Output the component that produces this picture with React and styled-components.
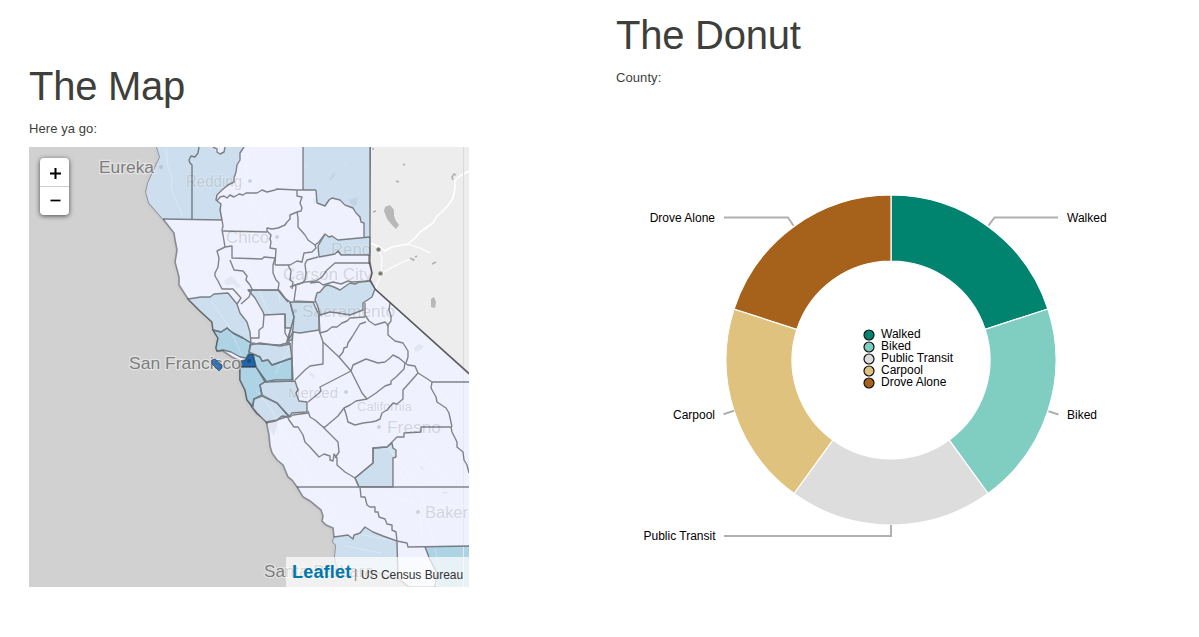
import React from "react";
import styled, { createGlobalStyle } from "styled-components";

const GlobalStyle = createGlobalStyle`
  body {
    margin: 0;
    background: #fff;
    color: #3e3f3a;
    font-family: "Liberation Sans", Arial, sans-serif;
    font-size: 13px;
    line-height: 18px;
  }
`;

const Page = styled.main`
  display: flex;
  width: 1199px;
  height: 637px;
  overflow: hidden;
`;

const Column = styled.section`
  box-sizing: border-box;
  flex: none;
  width: ${(p) => p.$width}px;
  padding-top: ${(p) => p.$top}px;
  padding-left: 29px;
`;

const Title = styled.h1`
  margin: 0 0 12px;
  font-size: 40px;
  font-weight: 400;
  line-height: 44px;
  letter-spacing: -0.25px;
`;

const Caption = styled.p`
  margin: 0 0 9px;
  letter-spacing: 0.08px;
`;

const MapFrame = styled.div`
  position: relative;
  width: 440px;
  height: 440px;
  overflow: hidden;
  background: #d1d1d1;
`;

const MapDrawing = styled.svg`
  display: block;
  width: 440px;
  height: 440px;
  font-family: "Liberation Sans", Arial, sans-serif;
`;

const ZoomControl = styled.div`
  position: absolute;
  top: 11px;
  left: 11px;
  width: 29px;
  border-radius: 4px;
  background: #fff;
  box-shadow: 0 1px 5px rgba(0, 0, 0, 0.65);
`;

const ZoomButton = styled.button`
  display: flex;
  align-items: center;
  justify-content: center;
  box-sizing: border-box;
  width: 100%;
  height: ${(p) => (p.$first ? 29 : 28)}px;
  padding: ${(p) => (p.$first ? "2px 0 0 1px" : "0 0 2px 1px")};
  border: 0;
  border-bottom: ${(p) => (p.$first ? "1px solid #ccc" : "0")};
  background: transparent;
`;

const Attribution = styled.div`
  position: absolute;
  right: 0;
  bottom: 0;
  display: flex;
  align-items: baseline;
  box-sizing: border-box;
  width: 183px;
  height: 30px;
  padding: 6px 5px 0 6px;
  background: rgba(255, 255, 255, 0.7);
  color: #333;
  font-size: 12px;
  white-space: nowrap;
`;

const LeafletLink = styled.a`
  width: 62px;
  color: #0078a8;
  font-size: 18px;
  font-weight: 700;
  letter-spacing: 0.2px;
`;

const Divider = styled.span`
  width: 3px;
  color: #777;
`;

const Source = styled.span`
  position: relative;
  top: 1px;
  margin-left: 4px;
  letter-spacing: -0.04px;
`;

const LAND =
  "157,147 160,157 153,172 148,183 146,192 149,203 163,219 174,233 175,240 177,250 175,262 179,277 179,285 188,299 200,311 212,322 213,330 218,338 216,348 217,351 223,351 232,357 240,361 240,380 245,390 247,400 252,407 257,414 266,420 269,435 270,446 272,453 277,460 283,465 288,477 292,480 297,487 303,497 310,501 321,510 323,516 322,521 326,525 333,528 334,537 333,542 336,545 335,557 337,567 359,571 382,573 399,579 409,587 475,587 475,378.6 375,289 370,280 372,273 369,262 370,140 157,140";

const KINGS =
  "373,448 387,447 392,443 393,448 396,450 396,457 393,458 393,487 359,487 355,478 373,463";
const FARALLON = "212,360 215,359 222,365 222,368 219,371 212,364";

const COUNTIES = [
  ["157,147 160,157 153,172 148,183 146,192 149,203 163,219 222,220 221,204 217,201 217,195 222,190 232,182 235,173 237,165 239,160 240,153 244,147 225,147 224,152 220,154 217,152 213,147", "#cddfee"],
  ["303,147 370,147 370,237 364,238 364,223 360,220 357,213 349,206 340,200 332,198 325,206 317,203 316,190 303,190", "#cddfee"],
  ["325,234 318,246 319,257 330,255 335,254 338,251 341,255 370,255 370,237 338,240 332,236 329,237", "#cddfee"],
  ["188,299 201,297 210,297 214,294 228,293 237,304 240,313 247,322 250,332 251,343 243,338 233,333 227,328 221,332 213,330 212,322 200,311", "#cddfee"],
  ["213,330 221,332 227,328 233,333 243,338 251,343 249,353 246,358 240,357 231,352 223,350 217,351 216,348 218,338", "#aed3e5"],
  ["248,290 255,298 263,312 264,315 285,314 285,328 291,328 287,341 292,340 294,317 290,302 285,298 279,290", "#cddfee"],
  ["290,302 313,302 319,315 319,330 300,333 293,332 288,341 290,331 294,317", "#cddfee"],
  ["315,300 317,293 320,292 325,286 328,285 334,287 340,290 350,283 355,284 359,282 370,281 375,289 372,297 363,303 363,310 350,315 338,313 330,312 320,315 318,307", "#cddfee"],
  ["250,345 260,343 280,346 290,344 292,358 272,365 268,360 262,361 260,357 249,352", "#cddfee"],
  ["253,354 260,357 262,361 268,360 272,365 292,358 293,380 275,380 265,382 256,367", "#aed3e5"],
  ["240,367 256,367 266,381 260,385 262,395 254,399 253,407 247,400 245,390 240,380", "#aed3e5"],
  ["265,382 295,381 298,390 296,393 299,401 307,402 307,412 292,413 289,417 277,403 262,395 260,385", "#cddfee"],
  ["254,399 262,396 277,403 289,416 277,420 266,422 257,413 252,407", "#cddfee"],
  ["249,354 253,354 256,367 240,367 241,361 245,360", "#2166ac"],
  [KINGS, "#cddfee"],
  ["334,537 348,535 353,539 354,535 360,533 365,527 373,532 383,536 397,541 398,579 382,573 337,567 335,557 336,545 333,542", "#cddfee"],
  ["425,547 469,546 469,587 437,587 437,573 430,560", "#aed3e5"],
];

const BORDERS = [
  "199,147 198,153 195,157 191,156 189,160 190,163 192,165 192,220",
  "213,147 217,149 217,152 220,154 224,152 225,147",
  "244,147 240,153 240,160 237,165 236,172 234,178 234,182 228,185 222,190 217,195 216,200 221,204 220,210 222,220 223,226 222,230 223,235 225,247",
  "217,201 220,197 224,196 227,198 230,195 234,197 239,194 243,195 246,193 257,193 262,190 267,192 275,190 277,189 297,190 303,190 316,190",
  "303,147 303,190",
  "163,219 222,220",
  "223,231 267,232",
  "297,190 297,196 302,197 300,203 302,208 301,211 297,212 290,215 290,219 287,222 285,225 278,228 272,229 267,228 267,231 271,235 270,239 271,242 270,248 276,249 275,265",
  "297,212 298,218 298,227 305,235 308,240 315,245 319,242 322,238 325,234",
  "315,245 316,248 312,252 304,253 302,262 297,261 290,265 275,265",
  "318,257 307,260 305,264 306,273 305,280 302,283 295,285 290,287",
  "370,263 335,263 327,270 322,277 316,281 305,282 292,286",
  "370,281 352,282 348,281 341,284 333,282 323,285 319,282 310,283",
  "288,265 291,271 290,280 293,282 292,289",
  "225,247 232,246 232,258 262,259 264,257 275,258",
  "225,247 217,251 219,258 218,267 215,273 215,276 218,281 222,289 233,289 241,298 237,304",
  "230,260 232,265 234,270 243,271 247,276 246,280 250,285 252,289 249,297 241,304",
  "275,258 273,265 273,273 276,280 279,283 278,290 282,295 288,302",
  "248,290 278,290",
  "264,315 263,327 259,330 259,338 251,338",
  "251,343 260,344 280,345 290,342",
  "285,314 285,333 288,338 287,343 291,344",
  "295,285 296,287 294,301 315,302",
  "319,315 320,333 327,331 332,327 337,327 342,323 347,321 350,318 365,317",
  "365,303 365,315 369,321 375,325 385,322 388,325 388,335 395,341 403,343 408,351 408,357 406,363",
  "366,322 360,324 352,337 348,343 347,347 344,348 343,352 339,357",
  "390,303 389,310 391,316 391,321 387,326",
  "319,330 323,342 339,357 351,371",
  "293,332 292,346 292,380",
  "323,342 323,364 310,366 305,370 295,380",
  "351,371 320,387 321,391 318,394 308,402",
  "351,371 353,365 366,359 378,363 385,362 390,358 393,355 399,358 405,363",
  "405,363 404,369 396,377 391,381 391,384 385,386 376,393 367,399 362,393 351,371",
  "367,399 356,401 350,405 344,408 338,416 325,427 323,427",
  "405,363 408,365 415,366 418,373 403,390 403,399 397,404 393,403 387,410 382,413 380,419 376,421 371,422 363,423 355,425 348,422 346,414 344,408",
  "418,373 426,378 432,382 469,382",
  "432,382 431,388 436,397 437,402 446,408 449,413 452,427",
  "308,411 310,417 315,420 323,427 338,442 339,452 335,458",
  "266,423 276,421 282,416 290,417 293,415 308,413",
  "287,416 289,420 294,427 298,427 303,435 305,442 310,447 319,457 324,454 330,456 330,460 333,461 334,454 337,458 337,465 345,472 355,478 359,487",
  "355,478 373,463 373,448 387,447 397,437 404,437 404,433 421,432 421,427 451,427 452,432 457,442 457,447 463,452 464,460 467,465 469,473",
  "297,487 469,487",
  "360,487 361,497 365,497 367,505 370,507 375,507 375,512 378,512 379,517 385,519 387,524 392,525 392,530 396,532 397,541 398,579",
  "397,541 407,543 408,547 469,546",
  "316,190 317,203 325,206 329,200 332,198 340,200 345,205 353,208 356,213 360,217 361,222 364,223 364,237",
  "334,537 348,535 353,539 354,535 360,533 365,527 373,532 383,536 397,541",
  "425,547 430,560 437,573 435,587",
  "370,147 370,262 372,273 370,280 375,289 469,374",
];

const GHOST_LABELS = [
  ["Redding", 186, 187, 56, 16],
  ["Chico", 226, 243, 43, 16],
  ["Reno", 331, 255, 40, 16],
  ["Carson City", 283, 280, 89, 16],
  ["Sacramento", 302, 317, 93, 16],
  ["Merced", 288, 398, 50, 15.5],
  ["California", 357, 411, 55, 12],
  ["Fresno", 387, 433, 54, 16],
  ["Baker", 425, 518, 43, 16.5],
];

const SEA_LABELS = [
  ["Eureka", 99, 173, 55],
  ["San Francisco", 129, 369, 112],
  ["Santa Barbara", 264, 577, 110],
];

const TOWNS = [
  [250, 181], [277, 237], [295, 311], [346, 392], [379, 427], [418, 512], [161, 167],
];

function CountyMap() {
  return (
    <MapDrawing viewBox="29 147 440 440" role="img" aria-label="California counties">
      <defs>
        <filter id="shore" x="-10%" y="-10%" width="120%" height="120%">
          <feGaussianBlur stdDeviation="2.5" />
        </filter>
      </defs>
      <polygon points={LAND} fill="#bcbcbc" filter="url(#shore)" />
      <path d="M370 147H469V374L375 289L369 280Z" fill="#ededed" />
      <g fill="none" stroke="#fff" strokeLinecap="round" strokeLinejoin="round">
        <path d="M370 243L378 246L385 251L392 247L408 244L416 237L420 232L433 223L437 216L444 210L449 204L453 198L455 188L455 180L460 176L469 171" strokeWidth="1.6" />
        <path d="M408 244L420 248L430 253M377 247L382 257L381 275L376 287M381 274L391 268L401 263L412 258" strokeWidth="1.1" />
      </g>
      <g fill="#b8b8b8">
        <path d="M385 207L390 205L394 210L394 216L396 221L399 225L396 229L392 225L387 219L384 211Z" />
        <path d="M431 299L434 297L436 302L435 308L431 307Z" />
      </g>
      <path d="M372 149h2M403 165l2-1M396 181l3 1M373 212l3-1M453 180l-1-3l2-3l2 1M410 258l4 2M413 261l1-2M415 257l2-1M432 264l4-2" fill="none" stroke="#b0b0b0" strokeWidth="1.6" />
      <path d="M463.5 147V370" stroke="#dadada" strokeWidth="1" />

      <polygon points={LAND} fill="#eff1fe" stroke="#8a8c90" strokeWidth="1.6" />
      {COUNTIES.map(([points, fill]) => (
        <polygon key={points} points={points} fill={fill} />
      ))}
      <path d="M463.5 370V587" stroke="#e6e8f4" strokeWidth="1" />
      <g fill="none" stroke="#fff" strokeOpacity="0.28" strokeWidth="1">
        <path d="M166 150L168 167L172 178L171 188L182 215M249 149L245 171L251 183L252 197L265 220L268 246L277 275L280 303M211 301L229 326L242 356M302 338L309 353L334 400L380 438L421 490L440 570M315 307L337 337L354 365M256 390L272 410L281 430L312 478L333 515L355 533L393 541M390 447L420 516L422 538" />
        <path d="M241 256L255 279L267 310L300 334M277 222L294 243M373 302L392 333L412 370L452 403M289 348L275 374M420 451L450 480M383 493L421 505L469 506M345 546L381 553" />
      </g>
      <g fill="#dce1ec" opacity="0.65">
        <path d="M224 281l7-5l3 2l7 9l-3 1l-5-4l-7 1ZM414 348l5-4l5 2l-3 4l-6 2ZM350 202l8-4l1 5l-4 1ZM313 198l4 2l-3 5ZM268 424l10-2l-4 14l-5-7ZM302 163l7 3l-3 3Z" />
        <path d="M310 372l5 4l-1 3l-5-5ZM442 491l7 2l-6 1ZM420 465l5 5l-4-1Z" />
      </g>
      <path d="M329 181l4-7l2-1l-2 5M350 164l3-2M349 200l9-2l-2 7l-3 1Z" fill="#c2d4e4" stroke="#c2d4e4" strokeWidth="0.8" />

      <g fill="#8f929c" fillOpacity="0.33" stroke="#fff" strokeOpacity="0.16" strokeWidth="2" paintOrder="stroke">
        {GHOST_LABELS.map(([label, x, y, width, size]) => (
          <text key={label} x={x} y={y} fontSize={size} textLength={width} lengthAdjust="spacingAndGlyphs">
            {label}
          </text>
        ))}
        {TOWNS.map(([x, y]) => (
          <circle key={`${x}-${y}`} cx={x} cy={y} r="2" stroke="none" />
        ))}
      </g>

      <g fill="none" stroke="#2a2a2a" opacity="0.55" strokeWidth="1.4" strokeLinejoin="round">
        {BORDERS.map((points) => (
          <polyline key={points} points={points} />
        ))}
        {COUNTIES.slice(2, 15).map(([points]) => (
          <polygon key={points} points={points} />
        ))}
      </g>
      <circle cx="249" cy="361" r="2" fill="#194a86" />
      <g fill="#727a65" stroke="#aaa" strokeWidth="0.8">
        <circle cx="378.5" cy="249.5" r="2" />
        <circle cx="380.5" cy="273.5" r="2" />
      </g>

      <g fill="#7d7d7d" fontSize="17" stroke="#eee" strokeOpacity="0.65" strokeWidth="2.4" paintOrder="stroke">
        {SEA_LABELS.map(([label, x, y, width]) => (
          <text key={label} x={x} y={y} textLength={width} lengthAdjust="spacingAndGlyphs">
            {label}
          </text>
        ))}
      </g>
      <polygon points={FARALLON} fill="#2166ac" fillOpacity="0.85" stroke="#31547f" strokeOpacity="0.8" />
    </MapDrawing>
  );
}

const CX = 891;
const CY = 360;
const MODES = [
  ["Walked", "#01846f", "M988.5 225.7L994.5 217.5H1058", 1067, 222, "start"],
  ["Biked", "#80cdc1", "M1048.5 411.2L1058.5 414.5", 1067, 419, "start"],
  ["Public Transit", "#dddddd", "M891 525V536H724", 715.5, 540, "end"],
  ["Carpool", "#dfc27d", "M734 410.8L723.5 414.3", 715, 419, "end"],
  ["Drove Alone", "#a6611a", "M793.5 225.7L788 217.5H724", 715, 222, "end"],
];

function point(radius, turn) {
  const angle = turn * 2 * Math.PI - Math.PI / 2;
  return `${(CX + radius * Math.cos(angle)).toFixed(2)} ${(CY + radius * Math.sin(angle)).toFixed(2)}`;
}

function arc(index, count) {
  const from = index / count;
  const to = (index + 1) / count;
  return `M${point(165, from)}A165 165 0 0 1 ${point(165, to)}L${point(99, to)}A99 99 0 0 0 ${point(99, from)}Z`;
}

const DonutDrawing = styled.svg`
  display: block;
  width: 583px;
  height: 520px;
  font-family: "Liberation Sans", Arial, sans-serif;
  font-size: 12px;
`;

function DonutChart() {
  return (
    <DonutDrawing viewBox="616 96 583 520" role="img" aria-label="Commute modes">
      {MODES.map(([name, color], i) => (
        <path key={name} d={arc(i, MODES.length)} fill={color} stroke="#fff" strokeWidth="1.2" />
      ))}
      {MODES.map(([name, color, line, x, y, anchor], i) => (
        <g key={name}>
          <path d={line} fill="none" stroke="#b0b0b0" strokeWidth="2" />
          <text x={x} y={y} textAnchor={anchor}>{name}</text>
          <circle cx="869" cy={335 + i * 12} r="5" fill={color} stroke="#111" strokeWidth="1.2" />
          <text x="881" y={338 + i * 12}>{name}</text>
        </g>
      ))}
    </DonutDrawing>
  );
}

export default function App() {
  return (
    <>
      <GlobalStyle />
      <Page>
        <Column $width={587} $top={64}>
          <Title>The Map</Title>
          <Caption>Here ya go:</Caption>
          <MapFrame>
            <CountyMap />
            <ZoomControl>
              <ZoomButton $first aria-label="Zoom in">
                <svg width="11" height="11" viewBox="0 0 11 11">
                  <path d="M0 5.5H11M5.5 0V11" stroke="#000" strokeWidth="2" />
                </svg>
              </ZoomButton>
              <ZoomButton aria-label="Zoom out">
                <svg width="11" height="11" viewBox="0 0 11 11">
                  <path d="M0.5 5.5H10.5" stroke="#000" strokeWidth="1.7" />
                </svg>
              </ZoomButton>
            </ZoomControl>
            <Attribution>
              <LeafletLink>Leaflet</LeafletLink>
              <Divider>|</Divider>
              <Source>US Census Bureau</Source>
            </Attribution>
          </MapFrame>
        </Column>
        <Column $width={612} $top={13}>
          <Title>The Donut</Title>
          <Caption>County:</Caption>
          <DonutChart />
        </Column>
      </Page>
    </>
  );
}
